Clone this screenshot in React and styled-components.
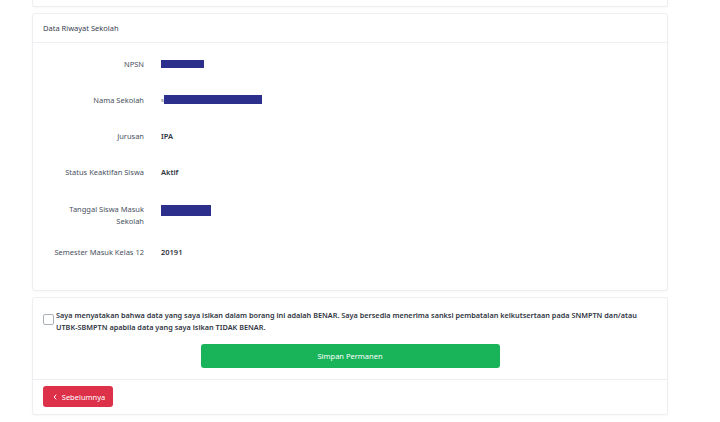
import React from "react";
import styled, { createGlobalStyle } from "styled-components";
import { ChevronLeft } from "lucide-react";

const GlobalStyle = createGlobalStyle`
  body {
    margin: 0;
    background: #fff;
    font-family: "Noto Sans", "Open Sans", sans-serif;
    color: #3b4250;
  }
`;

const Page = styled.div`
  width: 636px;
  padding: 0 0 8px 32px;
  display: flex;
  flex-direction: column;
  gap: 6px;
`;

const Card = styled.div`
  background: #fff;
  border: 1px solid #eceef1;
  border-radius: 3px;
  box-shadow: 0 1px 2px rgba(0, 0, 0, 0.03);
`;

const StubCard = styled(Card)`
  height: 6px;
  border-top: none;
  border-radius: 0 0 3px 3px;
`;

const CardHeader = styled.div`
  height: 28px;
  padding: 0 10px;
  display: flex;
  align-items: center;
  border-bottom: 1px solid #eceef1;
  font-size: 7.5px;
  color: #3b4250;
`;

const CardBody = styled.div`
  padding: 15px 10px 32px;
  display: flex;
  flex-direction: column;
  gap: 24px;
`;

const Row = styled.div`
  display: grid;
  grid-template-columns: 101px 1fr;
  column-gap: 17px;
  font-size: 7.5px;
  line-height: 12px;
  margin-top: ${(p) => p.$pull || 0}px;
`;

const Label = styled.div`
  text-align: right;
  color: #4a5160;
`;

const Value = styled.div`
  display: flex;
  align-items: flex-start;
  height: 12px;
  font-weight: 600;
  color: #2f3542;
`;

const Redacted = styled.span`
  display: inline-block;
  width: ${(p) => p.w}px;
  height: ${(p) => p.h || 8}px;
  margin-top: ${(p) => p.top || 2}px;
  background: #2c2f8c;
`;

const Stray = styled.span`
  font-size: 6px;
  line-height: 12px;
  color: #888;
`;

const AgreeBody = styled.div`
  padding: 11px 10px 11px;
  display: flex;
  flex-direction: column;
  align-items: center;
  gap: 11px;
  border-bottom: 1px solid #eceef1;
`;

const Agree = styled.label`
  align-self: stretch;
  display: flex;
  gap: 2px;
  font-size: 7.3px;
  line-height: 12px;
  font-weight: 600;
  color: #2f3542;
`;

const Check = styled.span`
  flex: none;
  width: 9px;
  height: 9px;
  margin-top: 5px;
  border: 1px solid #aab0b8;
  border-radius: 2px;
  background: #fff;
`;

const SaveButton = styled.button`
  width: 299px;
  height: 24px;
  border: none;
  border-radius: 3px;
  background: #19b45a;
  color: #fff;
  font-family: inherit;
  font-size: 7.5px;
`;

const Footer = styled.div`
  padding: 6px 10px 7px;
`;

const BackButton = styled.button`
  height: 21px;
  width: 70px;
  border: none;
  border-radius: 3px;
  background: #dd3149;
  color: #fff;
  font-family: inherit;
  font-size: 7.5px;
  display: flex;
  align-items: center;
  justify-content: center;
  gap: 3px;
`;

const rows = [
  { label: "NPSN", value: <Redacted w={43} /> },
  {
    label: "Nama Sekolah",
    value: (
      <>
        <Stray>s</Stray>
        <Redacted w={98} h={9} top={1} />
      </>
    ),
  },
  { label: "Jurusan", value: "IPA" },
  { label: "Status Keaktifan Siswa", value: "Aktif" },
  {
    label: (
      <>
        Tanggal Siswa Masuk
        <br />
        Sekolah
      </>
    ),
    value: <Redacted w={50} h={11} top={0} />,
    pull: 1,
  },
  { label: "Semester Masuk Kelas 12", value: "20191", pull: -5 },
];

export default function App() {
  return (
    <>
      <GlobalStyle />
      <Page>
        <StubCard />
        <Card>
          <CardHeader>Data Riwayat Sekolah</CardHeader>
          <CardBody>
            {rows.map((r, i) => (
              <Row key={i} $pull={r.pull}>
                <Label>{r.label}</Label>
                <Value>{r.value}</Value>
              </Row>
            ))}
          </CardBody>
        </Card>
        <Card>
          <AgreeBody>
            <Agree>
              <Check />
              <span>
                Saya menyatakan bahwa data yang saya isikan dalam borang ini
                adalah BENAR. Saya bersedia menerima sanksi pembatalan
                keikutsertaan pada SNMPTN dan/atau UTBK-SBMPTN apabila data
                yang saya isikan TIDAK BENAR.
              </span>
            </Agree>
            <SaveButton>Simpan Permanen</SaveButton>
          </AgreeBody>
          <Footer>
            <BackButton>
              <ChevronLeft size={8} strokeWidth={3} />
              Sebelumnya
            </BackButton>
          </Footer>
        </Card>
      </Page>
    </>
  );
}
